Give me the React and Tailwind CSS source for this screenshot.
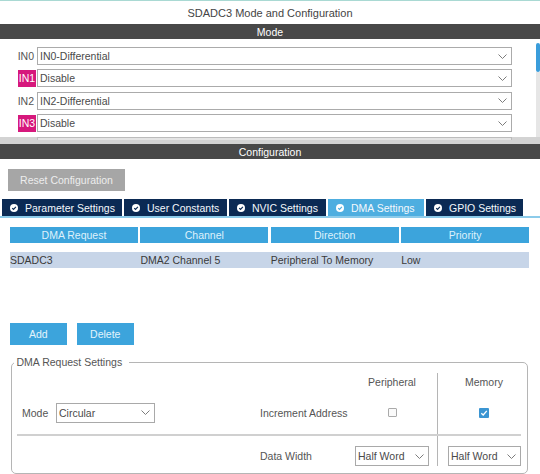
import React from "react";

const Chevron = () => (
  <svg width="9" height="5" viewBox="0 0 9 5" className="shrink-0">
    <polyline points="0.5,0.5 4.5,4.5 8.5,0.5" fill="none" stroke="#7c7c7c" strokeWidth="1" />
  </svg>
);

const Check = ({ color }) => (
  <svg width="8" height="8" viewBox="0 0 8 8" className="shrink-0">
    <circle cx="4" cy="4" r="4" fill="#ffffff" />
    <polyline points="2.2,4.1 3.5,5.3 5.9,2.8" fill="none" stroke={color} strokeWidth="1.2" />
  </svg>
);

const ModeRow = ({ label, value, pink }) => (
  <div className="flex items-center h-[18px]">
    <div className="w-[37px] h-full flex items-center justify-end">
      {pink ? (
        <span className="bg-[#d6187c] text-white h-[17px] w-[18px] mr-[1px] flex items-center justify-center leading-none">
          {label}
        </span>
      ) : (
        <span className="text-[#555] pr-[3px]">{label}</span>
      )}
    </div>
    <div className="w-[475px] h-full border border-[#ababab] bg-white flex items-center justify-between pl-[2px] pr-[4px] text-[#4a4a4a]">
      <span>{value}</span>
      <Chevron />
    </div>
  </div>
);

const Tab = ({ label, w, active }) => (
  <div
    className={`${w} h-full flex items-center gap-[7px] pl-[8px] text-[#f4f8fc] ${
      active ? "bg-[#4eaee0]" : "bg-[#0b2a54]"
    }`}
  >
    <Check color={active ? "#4eaee0" : "#0b2a54"} />
    <span className="whitespace-nowrap">{label}</span>
  </div>
);

const Select = ({ value, w }) => (
  <div className={`${w} h-[20px] border border-[#a9a9a9] bg-white flex items-center justify-between pl-[2px] pr-[4px] text-[#4a4a4a]`}>
    <span className="whitespace-nowrap">{value}</span>
    <Chevron />
  </div>
);

export default function App() {
  return (
    <div className="w-[540px] h-[474px] overflow-hidden bg-white flex flex-col text-[10.5px] leading-[14px] text-[#444] font-['Liberation_Sans',Arial,sans-serif]">
      <div className="h-px bg-[#a9d9d3]" />
      <div className="h-[23px] flex items-center justify-center text-[11px] text-[#444]">
        SDADC3 Mode and Configuration
      </div>
      <div className="h-[15px] bg-[#484848] text-white flex items-center justify-center">Mode</div>

      {/* Mode panel */}
      <div className="h-[98px] flex overflow-hidden">
        <div className="flex-1 pt-[8px] flex flex-col gap-[4.4px]">
          <ModeRow label="IN0" value="IN0-Differential" />
          <ModeRow label="IN1" value="Disable" pink />
          <ModeRow label="IN2" value="IN2-Differential" />
          <ModeRow label="IN3" value="Disable" pink />
        </div>
        <div className="w-[4px] flex flex-col">
          <div className="h-[4px]" />
          <div className="h-[29px] rounded-full bg-[#3a9ddb]" />
          <div className="flex-1 bg-[#e6e6e6]" />
        </div>
      </div>
      <div className="h-[7px] bg-[#d3d3d3] flex">
        <div className="ml-[37px] w-[475px] h-[3px] bg-[#e4e4e4] border-t border-x border-[#bcbcbc]" />
      </div>

      <div className="h-[15px] bg-[#484848] text-white flex items-center justify-center">Configuration</div>

      <div className="mt-[10px] ml-[8px] w-[117px] h-[22px] bg-[#a6a6a6] text-[#ededed] flex items-center justify-center">
        Reset Configuration
      </div>

      {/* Tabs */}
      <div className="mt-[8px] ml-[2px] h-[17px] flex gap-[2px]">
        <Tab label="Parameter Settings" w="w-[120px]" />
        <Tab label="User Constants" w="w-[103px]" />
        <Tab label="NVIC Settings" w="w-[97px]" />
        <Tab label="DMA Settings" w="w-[96px]" active />
        <Tab label="GPIO Settings" w="w-[97px]" />
      </div>
      <div className="h-[2px] bg-[#8ccbea]" />

      {/* Table */}
      <div className="mt-[9px] ml-[10px] w-[519px] h-[16px] grid grid-cols-4 gap-x-[2.5px]">
        {["DMA Request", "Channel", "Direction", "Priority"].map((h) => (
          <div key={h} className="bg-[#3ca4dc] text-[#def1fb] flex items-center justify-center">
            {h}
          </div>
        ))}
      </div>
      <div className="mt-[9px] ml-[10px] w-[519px] h-[16px] bg-[#c7d5e8] grid grid-cols-4 gap-x-[2.5px] text-[#3a3a3a]">
        {["SDADC3", "DMA2 Channel 5", "Peripheral To Memory", "Low"].map((c) => (
          <div key={c} className="flex items-center">
            {c}
          </div>
        ))}
      </div>

      {/* Buttons */}
      <div className="mt-[55px] ml-[10px] flex gap-[10.5px]">
        <div className="w-[56.5px] h-[21.5px] bg-[#3ca4dc] text-[#e2f4fc] flex items-center justify-center">Add</div>
        <div className="w-[56.5px] h-[21.5px] bg-[#3ca4dc] text-[#e2f4fc] flex items-center justify-center">Delete</div>
      </div>

      {/* Fieldset */}
      <fieldset className="mt-[10.5px] ml-[11px] w-[517px] border border-[#b5b5b5] rounded-[5px] pb-[7px] text-[#555]">
        <legend className="ml-[2px] pl-[2.5px] pr-[7px] leading-[14px]">DMA Request Settings</legend>
        <div className="mt-[4px] h-[18px] flex">
          <div className="w-[335px]" />
          <div className="w-[90px] flex items-center justify-center">Peripheral</div>
          <div className="flex-1 border-l border-[#b5b5b5] flex items-center justify-center pl-[3px]">Memory</div>
        </div>
        <div className="h-[43px] flex">
          <div className="w-[248px] flex items-center">
            <div className="w-[44px] pl-[10px]">Mode</div>
            <Select value="Circular" w="w-[99px]" />
          </div>
          <div className="w-[87px] flex items-center whitespace-nowrap">Increment Address</div>
          <div className="w-[90px] flex items-center justify-center">
            <div className="w-[9px] h-[9px] border border-[#aaaaaa] bg-[#fafafa] rounded-[1px]" />
          </div>
          <div className="flex-1 border-l border-[#b5b5b5] flex items-center justify-center pl-[3px]">
            <div className="w-[10px] h-[10px] bg-[#3b95d2] rounded-[1px] flex items-center justify-center">
              <svg width="8" height="8" viewBox="0 0 8 8">
                <polyline points="1.3,4.2 3.2,6 6.8,1.8" fill="none" stroke="#ffffff" strokeWidth="1.3" />
              </svg>
            </div>
          </div>
        </div>
        <div className="ml-[5px] mr-[6px] h-[2px] bg-[#d0d0d0]" />
        <div className="h-[30px] flex">
          <div className="w-[248px]" />
          <div className="w-[87px] flex items-end">
            <div className="h-[20px] flex items-center">Data Width</div>
          </div>
          <div className="w-[90px] flex items-end">
            <div className="ml-[8px]">
              <Select value="Half Word" w="w-[74px]" />
            </div>
          </div>
          <div className="flex-1 border-l border-[#b5b5b5] flex items-end">
            <div className="ml-[10px]">
              <Select value="Half Word" w="w-[73px]" />
            </div>
          </div>
        </div>
      </fieldset>
      <div className="flex-1 bg-[#f0f0f0]" />
    </div>
  );
}
